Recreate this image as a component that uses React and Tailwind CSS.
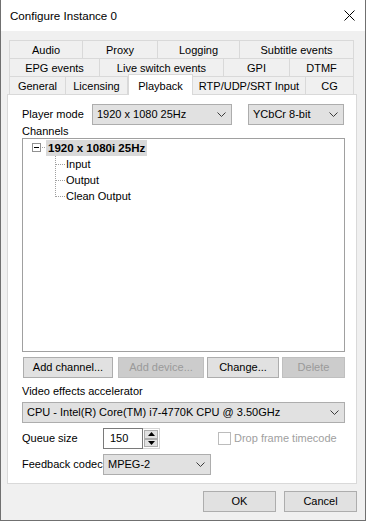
import React from "react";

const rows = [
  [
    { label: "Audio", w: "w-[74px]" },
    { label: "Proxy", w: "w-[75px]" },
    { label: "Logging", w: "w-[82px]" },
    { label: "Subtitle events", w: "w-[114px]" },
  ],
  [
    { label: "EPG events", w: "w-[91px]" },
    { label: "Live switch events", w: "w-[124px]" },
    { label: "GPI", w: "w-[66px]" },
    { label: "DTMF", w: "w-[64px]" },
  ],
  [
    { label: "General", w: "w-[57px]" },
    { label: "Licensing", w: "w-[62px]" },
    { label: "Playback", w: "w-[65px]", active: true },
    { label: "RTP/UDP/SRT Input", w: "w-[113px]" },
    { label: "CG", w: "w-[48px]" },
  ],
];

function Chevron() {
  return (
    <svg width="9" height="5" viewBox="0 0 9 5" className="shrink-0">
      <polyline points="0.5,0.5 4.5,4.5 8.5,0.5" fill="none" stroke="#3c3c3c" strokeWidth="1" />
    </svg>
  );
}

function Combo({ value, className }) {
  return (
    <div
      className={`flex h-[21px] items-center justify-between border border-[#adadad] bg-[#e1e1e1] pl-[4px] pr-[5px] ${className}`}
    >
      <span className="whitespace-nowrap">{value}</span>
      <Chevron />
    </div>
  );
}

function Button({ children, disabled, className }) {
  return (
    <div
      className={`flex h-[21px] items-center justify-center whitespace-nowrap border ${
        disabled
          ? "border-[#bfbfbf] bg-[#cccccc] text-[#9a9a9a]"
          : "border-[#adadad] bg-[#e1e1e1] text-black"
      } ${className}`}
    >
      {children}
    </div>
  );
}

function TabRow({ tabs }) {
  return (
    <div className="flex h-[18px] items-end">
      {tabs.map((t, i) =>
        t.active ? (
          <div
            key={t.label}
            className={`relative z-10 -mb-px flex h-[21px] items-start justify-center whitespace-nowrap border-x border-t border-[#d9d9d9] bg-white pt-[3px] ${t.w}`}
          >
            {t.label}
          </div>
        ) : (
          <div
            key={t.label}
            className={`flex h-[18px] items-center justify-center whitespace-nowrap border-t border-r border-[#d9d9d9] pt-[1px] ${
              i === 0 ? "border-l" : ""
            } ${t.w}`}
          >
            {t.label}
          </div>
        )
      )}
    </div>
  );
}

function ChildNode({ label, last }) {
  return (
    <div className="flex h-[16px] items-center pl-[32px]">
      <svg width="11" height="16" viewBox="0 0 11 16" className="shrink-0">
        <line x1="0.5" y1="0" x2="0.5" y2={last ? 9 : 16} stroke="#a0a0a0" strokeDasharray="1 1" />
        <line x1="1" y1="8.5" x2="10" y2="8.5" stroke="#a0a0a0" strokeDasharray="1 1" />
      </svg>
      <span className="leading-[16px]">{label}</span>
    </div>
  );
}

export default function App() {
  return (
    <div
      className="flex h-[521px] w-[366px] flex-col border-x border-b border-[#707070] bg-[#f0f0f0] text-[11px] text-black"
      style={{ fontFamily: '"Liberation Sans", Arial, sans-serif' }}
    >
      <div className="flex h-[31px] items-center justify-between bg-white pl-[9px] pr-[10px]">
        <span className="text-[11.6px]">Configure Instance 0</span>
        <svg width="11" height="11" viewBox="0 0 11 11">
          <line x1="0.5" y1="0.5" x2="10.5" y2="10.5" stroke="#000" strokeWidth="1" />
          <line x1="10.5" y1="0.5" x2="0.5" y2="10.5" stroke="#000" strokeWidth="1" />
        </svg>
      </div>

      <div className="flex flex-1 flex-col px-[6px] pt-[9px]">
        <div className="ml-[2px] w-[345px]">
          {rows.map((r, i) => (
            <TabRow key={i} tabs={r} />
          ))}
        </div>

        <div className="flex h-[390px] w-[350px] flex-col border border-[#d9d9d9] bg-white pl-[14px] pt-[9px]">
          <div className="flex h-[21px] items-center">
            <span className="w-[70px] whitespace-nowrap">Player mode</span>
            <Combo value="1920 x 1080 25Hz" className="w-[140px]" />
            <Combo value="YCbCr 8-bit" className="ml-[16px] w-[96px]" />
          </div>
          <div className="h-[13px] leading-[13px]">Channels</div>
          <div className="h-[214px] w-[323px] border border-[#a0a0a0] pt-[1px]">
            <div className="flex h-[16px] items-center pl-[9px]">
              <svg width="14" height="16" viewBox="0 0 14 16" className="shrink-0">
                <rect x="0.5" y="3.5" width="8" height="8" fill="#fff" stroke="#919191" />
                <line x1="2" y1="7.5" x2="7" y2="7.5" stroke="#000" />
                <line x1="10" y1="7.5" x2="14" y2="7.5" stroke="#a0a0a0" strokeDasharray="1 1" />
              </svg>
              <span className="h-[16px] whitespace-nowrap bg-[#d9d9d9] px-[2px] text-[11.5px] font-bold leading-[16px]">
                1920 x 1080i 25Hz
              </span>
            </div>
            <ChildNode label="Input" />
            <ChildNode label="Output" />
            <ChildNode label="Clean Output" last />
          </div>

          <div className="ml-[1px] mt-[5px] flex">
            <Button className="w-[90px]">Add channel...</Button>
            <Button disabled className="ml-[5px] w-[86px]">
              Add device...
            </Button>
            <Button className="ml-[3px] w-[72px]">Change...</Button>
            <Button disabled className="ml-[3px] w-[63px]">
              Delete
            </Button>
          </div>

          <div className="mb-[4px] mt-[6px] h-[14px] leading-[14px]">Video effects accelerator</div>
          <Combo value="CPU - Intel(R) Core(TM) i7-4770K CPU @ 3.50GHz" className="w-[323px]" />

          <div className="mt-[5px] flex h-[21px] items-center">
            <span className="w-[81px] whitespace-nowrap">Queue size</span>
            <div className="flex h-[21px] w-[40px] items-center border border-[#7a7a7a] pl-[6px]">150</div>
            <div className="flex h-[21px] w-[17px] flex-col border-y border-r border-[#d4d4d4] px-[1px] py-px">
              <div className="flex flex-1 items-center justify-center border border-[#adadad] bg-[#e1e1e1]">
                <svg width="7" height="4" viewBox="0 0 7 4">
                  <polygon points="3.5,0 7,4 0,4" fill="#000" />
                </svg>
              </div>
              <div className="flex flex-1 items-center justify-center border border-[#adadad] bg-[#e1e1e1]">
                <svg width="7" height="4" viewBox="0 0 7 4">
                  <polygon points="0,0 7,0 3.5,4" fill="#000" />
                </svg>
              </div>
            </div>
            <div className="ml-[58px] h-[13px] w-[13px] shrink-0 border border-[#bcbcbc] bg-white" />
            <span className="ml-[3px] whitespace-nowrap text-[#a0a0a0]">Drop frame timecode</span>
          </div>

          <div className="mt-[5px] flex h-[21px] items-center">
            <span className="w-[81px] whitespace-nowrap">Feedback codec</span>
            <Combo value="MPEG-2" className="w-[108px]" />
          </div>
        </div>

        <div className="mt-[7px] flex w-[350px] justify-end">
          <Button className="w-[73px]">OK</Button>
          <Button className="ml-[8px] w-[73px]">Cancel</Button>
        </div>
      </div>
    </div>
  );
}
